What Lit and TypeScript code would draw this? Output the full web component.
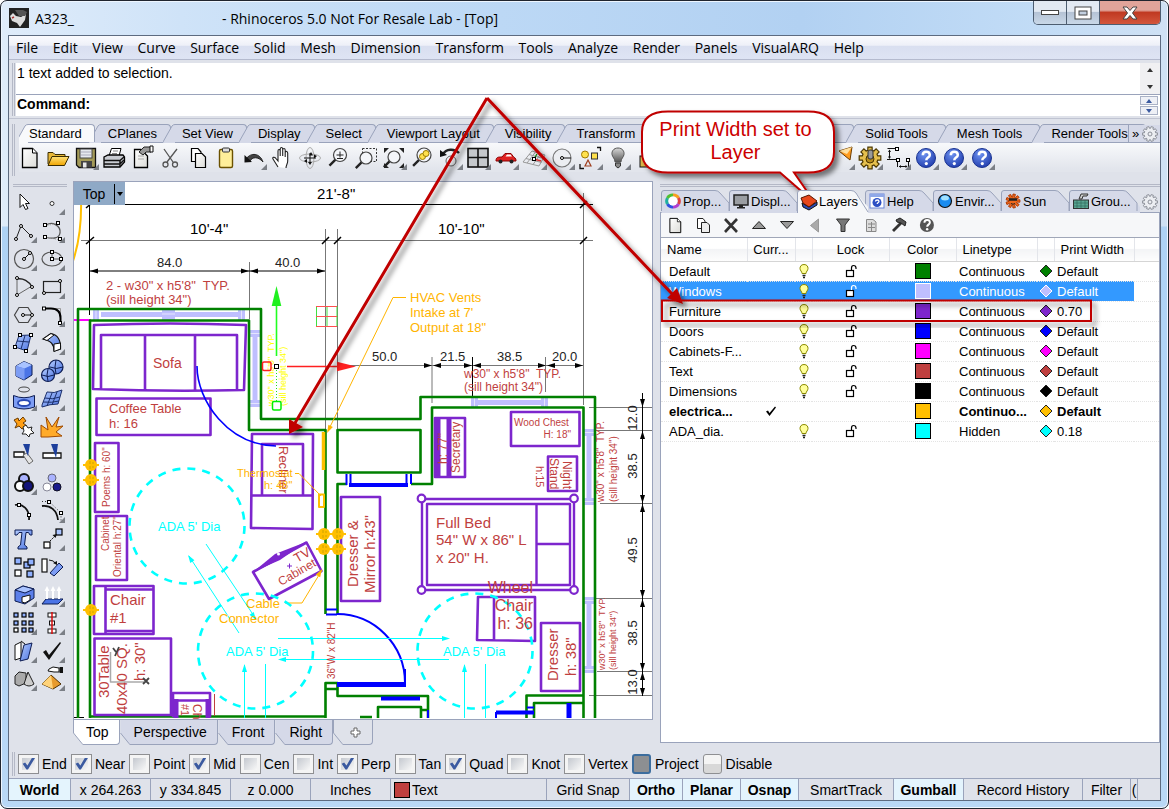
import { LitElement, html, svg, css } from "lit";
import { customElement } from "lit/decorators.js";
import { classMap } from "lit/directives/class-map.js";

/* ---------- icons, drawn on a 28 x 28 grid ---------- */
const page = svg`<path d="M6.500 4.500H16.500L21 9V23.500H6.500Z" fill="url(#pg)" stroke="#000" stroke-width="1.300"/><path d="M16.500 4.500V9H21" fill="#fff" stroke="#000"/>`;
const defs = svg`<defs>
  <linearGradient id="pg" x1="0" y1="0" x2="1" y2="1"><stop offset="0" stop-color="#fff"/><stop offset="1" stop-color="#dcdcd8"/></linearGradient>
  <linearGradient id="fo" x1="0" y1="0" x2="0" y2="1"><stop offset="0" stop-color="#ffe27a"/><stop offset="1" stop-color="#f0a400"/></linearGradient>
  <linearGradient id="bl" x1="0" y1="0" x2="1" y2="1"><stop offset="0" stop-color="#b4ccff"/><stop offset="1" stop-color="#4a72e0"/></linearGradient>
  <radialGradient id="hp" cx=".4" cy=".3" r=".8"><stop offset="0" stop-color="#6d92f0"/><stop offset="1" stop-color="#1b36a8"/></radialGradient>
  <linearGradient id="gr" x1="0" y1="0" x2="0" y2="1"><stop offset="0" stop-color="#d8d8d8"/><stop offset="1" stop-color="#555"/></linearGradient>
</defs>`;
const gearPath = (r: number, n: number, cx = 14, cy = 14, d = 3) => {
  let p = "";
  for (let i = 0; i < n; i++) {
    const a = (i * 2 * Math.PI) / n, s = Math.PI / n;
    const pt = (rr: number, aa: number) => `${(cx + rr * Math.cos(aa)).toFixed(1)} ${(cy + rr * Math.sin(aa)).toFixed(1)}`;
    p += `${i ? "L" : "M"}${pt(r, a - s * 0.5)}L${pt(r, a + s * 0.5)}L${pt(r - d, a + s * 0.7)}L${pt(r - d, a + s * 1.3)}`;
  }
  return p + "Z";
};
const help = svg`<circle cx="14" cy="14" r="9.500" fill="url(#hp)" stroke="#1a3390"/><path d="M10.800 11.200C10.800 8.800 12.200 7.800 14.200 7.800C16.400 7.800 17.800 9 17.800 10.900C17.800 13.600 14.300 13.600 14.300 16.200" fill="none" stroke="#fff" stroke-width="2.500"/><circle cx="14.300" cy="19.600" r="1.600" fill="#fff"/>`;
const dot = (x: number, y: number) => svg`<rect x=${x - 1.5} y=${y - 1.5} width="3" height="3" fill="#fff" stroke="#000"/>`;
const rnd = (x: number, y: number) => svg`<circle cx=${x} cy=${y} r="1.500" fill="#fff" stroke="#000"/>`;
const bx = (x: number, y: number, f: string, w = 5) => svg`<rect x=${x} y=${y} width=${w} height=${w} fill=${f} stroke="#000" stroke-width="1.200"/>`;
const lens = (x: number, y: number, r: number) => svg`<path d="M${x - r * 0.7} ${y + r * 0.7}L${x - r * 0.7 - 6} ${y + r * 0.7 + 6}" stroke="#222" stroke-width="2.400"/><circle cx=${x} cy=${y} r=${r} fill="#f4f6fa" stroke="#444" stroke-width="1.200"/>`;

const icons: Record<string, unknown> = {
  new: page,
  open: svg`<path d="M4 20V8.500H9L11 10.500H21V13" fill="#e8b838" stroke="#3a2c00"/><path d="M4 21.500L8 12.500H25L20.500 21.500Z" fill="url(#fo)" stroke="#3a2c00"/>`,
  save: svg`<path d="M4.500 4.500H23.500V23.500H7L4.500 21Z" fill="#a39a58" stroke="#111" stroke-width="1.300"/><rect x="8" y="5" width="12" height="9" fill="#e6e9ee" stroke="#444"/><path d="M9 8H19M9 11H19" stroke="#aab"/><rect x="9" y="17" width="11" height="6.500" fill="#444"/><rect x="11" y="18.500" width="3.500" height="5" fill="#e8e8e8"/>`,
  print: svg`<path d="M9 12L11.500 4.500H21L19 12" fill="#fff" stroke="#000"/><path d="M13 7H18M12 9.500H17" stroke="#888"/><path d="M4 13L8 11H23L24.500 13V18L20 23H4Z" fill="#c9ccd2" stroke="#000" stroke-width="1.300"/><path d="M4 16.500H20L24 13M4 20H20L24 16M20 23V16" fill="none" stroke="#111" stroke-width="1.500"/>`,
  props: svg`<path d="M6.500 5.500H13L19.500 12V23.500H6.500Z" fill="url(#pg)" stroke="#000" stroke-width="1.300"/><path d="M11 8L16 3H23V8H18L15 11Z" fill="#999" stroke="#222"/><path d="M22 2H25V8H22Z" fill="#fff" stroke="#111"/><path d="M10 12H16M10 15H16" stroke="#aaa"/>`,
  cut: svg`<path d="M8 5L17 18M21 5L11 18" stroke="#555" stroke-width="1.300"/><circle cx="9.500" cy="20.500" r="2.500" fill="none" stroke="#555" stroke-width="1.300"/><circle cx="19" cy="20.500" r="2.500" fill="none" stroke="#555" stroke-width="1.300"/>`,
  copy: svg`<path d="M7.500 4.500H14L17 8V17.500H7.500Z" fill="#fff" stroke="#000" stroke-width="1.200"/><path d="M11.500 9.500H18L21.500 13V23.500H11.500Z" fill="url(#pg)" stroke="#000" stroke-width="1.200"/>`,
  paste: svg`<rect x="7.500" y="5.500" width="13" height="18" rx="1.500" fill="#ffef9a" stroke="#6b5200" stroke-width="1.400"/><rect x="10.500" y="4" width="7" height="4" rx="1" fill="#ddd" stroke="#333"/>`,
  undo: svg`<path d="M6 15C11 8 20 9 23 18C18 12 12 13 10 17" fill="#444" stroke="#222"/><path d="M4.500 11L4.500 18.500L12 18Z" fill="#111"/>`,
  hand: svg`<path d="M10 23L5 15C4 13.500 6 12.500 7.500 14L10 17V7C10 5 12 5 12.200 7V12V5C12.500 3 14.500 3 14.700 5V12V6C15 4 17 4.200 17.200 6V13V8.500C17.500 7 19.500 7 19.700 9V17C19.700 20 18 21 18 24" fill="#fff" stroke="#222" stroke-width="1.100"/>`,
  rotate: svg`<ellipse cx="14" cy="14" rx="10.500" ry="4" fill="none" stroke="#aaa"/><ellipse cx="14" cy="14" rx="4" ry="10.500" fill="none" stroke="#aaa"/><path d="M8 14H20M14 9V19" stroke="#111"/><path d="M15 8L13 11.500H17ZM21 12L18 10.500V14.500ZM8 17L11 15V19ZM14 21L12 18H16Z" fill="#111"/>`,
  zoom: svg`${lens(16, 11, 6.5)}<path d="M12.500 11H19.500M16 7.500V13.500M13 14.500H19" stroke="#222"/>`,
  zoomwin: svg`<rect x="10.500" y="4.500" width="14" height="13" fill="none" stroke="#333" stroke-dasharray="2 1.500"/>${lens(14, 14, 6)}`,
  zoomext: svg`${lens(14, 13, 6)}<path d="M4 4H9L4 9ZM24 4V9L19 4ZM24 24H19L24 19ZM4 24V19L9 24Z" fill="#222"/>`,
  zoomsel: svg`${lens(16, 11, 7)}<circle cx="14.500" cy="12.500" r="3" fill="#ffe14d" stroke="#9a7a00"/><circle cx="18" cy="9.500" r="3" fill="#ffe14d" stroke="#9a7a00"/>`,
  undoview: svg`<circle cx="15" cy="17" r="5" fill="#f0f1f5" stroke="#666"/><path d="M7 10C10 5 18 4 23 9" fill="none" stroke="#222" stroke-width="2.400"/><path d="M4 6V13L11 11Z" fill="#111"/>`,
  four: svg`<rect x="4" y="4.500" width="20" height="18.500" fill="#c5c8cc" stroke="#111" stroke-width="1.600"/><path d="M14 4.500V23M4 13.500H24" stroke="#111" stroke-width="1.600"/>`,
  car: svg`<path d="M4 17C4 13 6 13 10 13L13 9.500H19L22 13.500C24 14 24 16 24 17Z" fill="#e02222" stroke="#8a0000"/><path d="M13.500 12.500L15 10.500H18.500L20 12.500Z" fill="#fff"/><circle cx="8.500" cy="17.500" r="2" fill="#222"/><circle cx="19.500" cy="17.500" r="2" fill="#222"/>`,
  grid: svg`<path d="M3 18L12 7L25 11L19 22ZM6 14.500L21.500 18.500M9 10.500L23.500 14.500M7 19L15.500 8M13 20.500L21 9.500" fill="none" stroke="#999"/><path d="M14 15L21 17" stroke="#d33" stroke-width="1.500"/><path d="M14 15L17 10" stroke="#080" stroke-width="1.200"/>${dot(14, 15)}`,
  circ: svg`<circle cx="14" cy="14" r="9" fill="#eceef2" stroke="#777" stroke-width="1.200"/><path d="M14 14H23" stroke="#111"/>${rnd(14, 14)}`,
  shapes: svg`<circle cx="9" cy="10.500" r="3.500" fill="#ffe14d" stroke="#a07800"/><rect x="15.500" y="9" width="6" height="6" fill="#ffe14d" stroke="#333"/><path d="M12 16L15 22H9Z" fill="none" stroke="#a04020" stroke-width="1.200"/><path d="M21 3.500H24.500V7M4 20V24.500H8" fill="none" stroke="#111" stroke-width="1.300"/>`,
  bulb: svg`<path d="M14 4C9.500 4 7.500 7.500 8 10.500C8.500 13.500 11 14.500 11 18H17C17 14.500 19.500 13.500 20 10.500C20.500 7.500 18.500 4 14 4Z" fill="url(#gr)" stroke="#555"/><path d="M11.500 19H16.500V22L14 24L11.500 22Z" fill="#888" stroke="#333"/>`,
  padlock: svg`<rect x="8" y="12" width="14" height="11" fill="#ddb848" stroke="#111"/><path d="M11 12V7C11 3 19 3 19 7V12" fill="none" stroke="#111" stroke-width="2"/>`,
  cone: svg`<path d="M11 7L24 3L22 16Z" fill="#ff9b1e" stroke="#6b3b00"/><path d="M11 7L24 3L19 10Z" fill="#ffe0a0"/>`,
  gold: svg`<path d=${gearPath(11, 8)} fill="#e6c04e" stroke="#4a3600" stroke-width="1.200"/><circle cx="14" cy="15" r="4" fill="#b98d1c" stroke="#4a3600"/><rect x="12" y="6" width="5" height="9" rx="2" fill="#999" stroke="#333"/>`,
  dims: svg`<path d="M3.500 4.500H12M3 15.500H13.500V23M24.500 17V24M5.500 6V14M15 22.500H23" fill="none" stroke="#111"/><path d="M4 8L5.500 5.500L7 8ZM4 12.500L5.500 15L7 12.500ZM17 21L15 22.500L17 24ZM21.500 21L23.500 22.500L21.500 24Z" fill="#111"/>${dot(13, 5)}${dot(14, 16)}${dot(24, 16)}`,
  help,
  /* sidebar */
  cursor: svg`<path d="M10 5L10 18.500L13 15.500L15.500 20.500L18 19.500L15.500 14.500H19.500Z" fill="#fff" stroke="#111"/>`,
  point: svg`<circle cx="14" cy="14.500" r="2" fill="#fff" stroke="#333"/>`,
  poly: svg`<path d="M6 22L11 9L21 19" fill="none" stroke="#222"/>${rnd(6, 22)}${rnd(11, 9)}${rnd(21, 19)}`,
  curve: svg`<path d="M7 9C14 3 23 9 22 16C21 22 14 22 7 20" fill="none" stroke="#555" stroke-width="1.300"/><path d="M7 9L20 6M7 20L22 23" stroke="#999" stroke-dasharray="1 1.500"/>${dot(7, 8)}${dot(20, 6)}${dot(7, 20)}${dot(22, 22)}`,
  circle: svg`<circle cx="14" cy="14" r="9.500" fill="none" stroke="#555" stroke-width="1.200"/><path d="M14 14L20 8" stroke="#111"/>${rnd(14, 14)}${rnd(20, 8)}`,
  ellipse: svg`<ellipse cx="14" cy="14" rx="10" ry="7" fill="none" stroke="#555" stroke-width="1.200"/><path d="M14 14H23M14 14V7" stroke="#555"/>${dot(14, 14)}${dot(14, 7)}${dot(23, 14)}`,
  arc: svg`<path d="M7 5V22L22 13" fill="none" stroke="#666"/><path d="M7 6C13 5 19 8 22 14" fill="none" stroke="#222" stroke-width="1.400"/>${rnd(7, 5)}${rnd(7, 22)}${rnd(22, 14)}`,
  rect: svg`<rect x="5.500" y="8.500" width="17" height="11" fill="none" stroke="#222" stroke-width="1.200"/>${rnd(22, 8)}${rnd(6, 20)}`,
  hex: svg`<path d="M4.500 14L9 6.500H18L22.500 14L18 21.500H9Z" fill="none" stroke="#444" stroke-width="1.200"/><path d="M14 14H22" stroke="#111"/>${rnd(13, 14)}${rnd(22, 14)}`,
  fillet: svg`<path d="M6 7.500H22.500V22" fill="none" stroke="#999"/><path d="M6 7.500H13C19 7.500 22.500 11 22.500 17V22" fill="none" stroke="#000" stroke-width="2"/>${dot(6, 7.5)}${dot(22, 22)}`,
  srf: svg`<path d="M9 6.500L21 6L17 22L5 18Z" fill="url(#bl)" stroke="#1b2f6b"/><path d="M7 12L19 13M15 6.500L11 20" stroke="#1b2f6b"/>${dot(10, 6)}${dot(21, 6)}${dot(5, 18)}${dot(16, 22)}`,
  sweep: svg`<path d="M5 10L13 4.500C20 6 23 11 22.500 20L16 22C16 15 13 12 5 10Z" fill="url(#bl)" stroke="#111" stroke-width="1.200"/><path d="M5 10L13 4.500L16 6L9 11.500ZM16 15L22.500 14V20L16 22.500Z" fill="#fff" stroke="#111"/>`,
  box: svg`<path d="M6 9L14 4.500L22 8V18L14 23L6 19Z" fill="#4b74e6" stroke="#0d1c52"/><path d="M6 9L14 4.500L22 8L14.500 11.500Z" fill="#a9c3ff"/><path d="M6 9L14.500 11.500V23L6 19Z" fill="#7d9df4"/>`,
  spheres: svg`<circle cx="18" cy="10" r="7" fill="url(#bl)" stroke="#0d1c52" stroke-width="1.200"/><circle cx="10" cy="18" r="6.500" fill="url(#bl)" stroke="#0d1c52" stroke-width="1.200"/><path d="M4 18Q10 21 16 18M10 12Q8 18 10 24M12 10Q18 13 25 10M18 3Q16 10 18 17" fill="none" stroke="#0d1c52"/>`,
  project: svg`<ellipse cx="14" cy="4.500" rx="5.500" ry="2.500" fill="none" stroke="#444"/><path d="M3.500 10.500Q14 15 24.500 10.500V22Q14 26 3.500 22Z" fill="#7d9df4" stroke="#0d1c52"/><ellipse cx="14" cy="18" rx="6" ry="3" fill="#fff" stroke="#2b4bb5" stroke-width="2"/>`,
  mesh: svg`<path d="M4 20L9 7Q16 9 24 5L20 19Q12 19 4 22Z" fill="url(#bl)" stroke="#1b2f6b"/><path d="M7 13Q14 15 22 12M14 8L9 21M19 7L14 20M5 17Q14 18 21 16" fill="none" stroke="#1b2f6b"/>`,
  puzzle: svg`<path d="M4 7L8 5L9 8L13 4L16 8L13 10L17 13L12 16L9 13L5 15L7 11Z" fill="#ff9e14" stroke="#6b3b00"/><path d="M13 14L16 12L18 15L22 14L21 17L24 20L20 21L19 24L16 21L12 21L14 18Z" fill="#fff" stroke="#222"/>`,
  burst: svg`<path d="M3 24V12L10 17L8 4L14 14L21 4L18 14L25 13L18 19L24 23L10 24Z" fill="#ffab2a" stroke="#a04a00"/>`,
  trim: svg`<path d="M4 11H14V16H4Z" fill="#fff" stroke="#111" stroke-width="1.300"/><path d="M13 14L17 12L23 20L19 23Z" fill="#e5e5e5" stroke="#666"/><path d="M13 3L20 3L18 15Z" fill="#1d3f9c"/>`,
  split: svg`<path d="M5 12H23V17H5Z" fill="#fff" stroke="#111" stroke-width="1.300"/><path d="M13 3H20L18 17Z" fill="#1d3f9c"/>`,
  bool: svg`<circle cx="14" cy="10" r="5" fill="#a9b2ff" stroke="#111" stroke-width="2"/><circle cx="10" cy="17" r="5" fill="#fff" stroke="#111" stroke-width="2"/><circle cx="18" cy="17" r="5" fill="#14147a" stroke="#111" stroke-width="2"/>`,
  three: svg`<circle cx="14" cy="9" r="4" fill="#a9b2ff" stroke="#667"/><circle cx="9" cy="18" r="4" fill="#fff" stroke="#889"/><circle cx="19" cy="18" r="4" fill="#1a1a8c" stroke="#112"/>`,
  cpts: svg`<path d="M5 8C12 6 20 12 19 23" fill="none" stroke="#111" stroke-width="1.800"/>${dot(9, 8)}${dot(19, 18)}`,
  cedit: svg`<path d="M4 9C12 8 19 13 20 23" fill="none" stroke="#111" stroke-width="1.800"/><path d="M4 4.500H11L23 16V24" fill="none" stroke="#333" stroke-dasharray="1 2"/>${dot(11, 5)}${dot(23, 16)}`,
  text: svg`<path d="M5 5H22V10H20L18.500 7.500H16L14.500 20L17 22V24H8V22L10.500 20L12 7.500H9L7 10H5Z" fill="url(#bl)" stroke="#0d1c52"/>`,
  move: svg`${bx(6, 17, "#fff", 6)}${bx(18, 4, "#a9c3ff", 6)}<path d="M12 16L17 11" stroke="#111" stroke-dasharray="2 1"/><path d="M19 9L14.500 10L17.500 13Z" fill="#111"/>`,
  copies: svg`${bx(5, 5, "#8fb0ff", 6)}${bx(5, 17, "#fff", 6)}${bx(14, 9, "#8fb0ff", 6)}${bx(18, 6, "#8fb0ff", 6)}${bx(17, 18, "#8fb0ff", 6)}`,
  rot: svg`<rect x="4" y="6" width="5" height="13" fill="#fff" stroke="#111" stroke-width="1.200"/><path d="M21 10L25 14L16 23L12 20Z" fill="#7d9df4" stroke="#0d1c52"/><path d="M11 7Q16 7 18 11" fill="none" stroke="#111"/><path d="M19 12L15 10L19 8Z" fill="#111"/>`,
  solidedit: svg`<path d="M5 9L13 5L24 8V17L15 23L5 20Z" fill="#5c80ea" stroke="#0d1c52"/><path d="M5 9L13 5L24 8L15 12Z" fill="#a9c3ff" stroke="#0d1c52"/><path d="M12 16L20 14V19L15 22L12 21Z" fill="#fff" stroke="#111"/>`,
  extr: svg`<path d="M4 23L8 18H25L20 23Z" fill="#4b74e6" stroke="#0d1c52"/><path d="M9 18V8M15 18V8M21 18V8" stroke="#fff" stroke-width="2"/><path d="M6.500 10L9 5L11.500 10ZM12.500 10L15 5L17.500 10ZM18.500 10L21 5L23.500 10Z" fill="#fff"/>`,
  array: svg`${[4, 12, 19].map((y) => [4, 12, 19].map((x) => bx(x, y, x === 4 && y === 19 ? "#fff" : "#8fb0ff", 4)))}`,
  align: svg`<rect x="10" y="4" width="8" height="4" fill="#fff" stroke="#111"/><rect x="11.500" y="12" width="5" height="4" fill="#fff" stroke="#111"/><rect x="10" y="20" width="8" height="4" fill="#fff" stroke="#111"/><path d="M14 3V25" stroke="#d00" stroke-width="1.400"/>`,
  check2: svg`<path d="M5 8L11 5V21L5 23Z" fill="#fff" stroke="#111"/><path d="M14 8L22 6L18 22L10 24Z" fill="url(#bl)" stroke="#0d1c52"/><path d="M11 4L15 7" stroke="#111"/>`,
  tick: svg`<path d="M5 15L8 13L11 18L22 5L23 6L11 23Z" fill="#111"/>`,
  solids: svg`<path d="M5 11L9 7L16 8V18L9 21L5 19Z" fill="#aaa" stroke="#222"/><path d="M18 7L24 19Q19 23 14 19Z" fill="#ccc" stroke="#222"/>`,
  pyramid: svg`<path d="M13 10L23 19L15 24L4 19Z" fill="#e79a2c" stroke="#4d2f00"/><path d="M13 10L15 24L4 19Z" fill="#ffd37a"/><path d="M11 4L15 2L21 3V7H16L10 6Z" fill="#fff" stroke="#111"/><rect x="21.500" y="2" width="3.500" height="6" fill="#111"/>`,
  /* layer panel strip */
  pnew: svg`<g transform="translate(4 4) scale(.75)">${page}</g>`,
  pcopy: svg`<path d="M8.500 7.500H14L16 10V17.500H8.500Z" fill="#fff" stroke="#222"/><path d="M12.500 11.500H18L20.500 14V21.500H12.500Z" fill="#eee" stroke="#222"/>`,
  pdel: svg`<path d="M8 8L20 21M20 8L8 21" stroke="#333" stroke-width="2.600"/>`,
  pup: svg`<path d="M7.500 17.500L14 10.500L20.500 17.500Z" fill="#999" stroke="#222"/>`,
  pdown: svg`<path d="M7.500 10.500L14 17.500L20.500 10.500Z" fill="#999" stroke="#222"/>`,
  pleft: svg`<path d="M17.500 8V21L9.500 14.500Z" fill="#aaa" stroke="#999"/>`,
  pfilter: svg`<path d="M7.500 8H20.500L16 14V20.500H12V14Z" fill="#777" stroke="#333"/>`,
  pgrid: svg`<path d="M9.500 8.500H16L19 11V20.500H9.500Z" fill="#ddd" stroke="#888"/><path d="M11 13H18M11 16.500H18M14.500 11V20" stroke="#888"/>`,
  phammer: svg`<path d="M8 20L16 12" stroke="#333" stroke-width="2.800"/><path d="M11 9L15 7L21 11L20 15L16 12L12 11Z" fill="#555" stroke="#222"/>`,
  phelp: svg`<g transform="translate(3 3) scale(.78)"><circle cx="14" cy="14" r="9" fill="#555"/><path d="M10.800 11.200C10.800 8.800 12.200 7.800 14.200 7.800C16.400 7.800 17.800 9 17.800 10.900C17.800 13.600 14.300 13.600 14.300 16.200" fill="none" stroke="#fff" stroke-width="2.500"/><circle cx="14.300" cy="19.600" r="1.600" fill="#fff"/></g>`,
  gear: svg`<path d=${gearPath(7.5, 10, 14, 14, 1.8)} fill="#eceef2" stroke="#8b8f98"/><circle cx="14" cy="14" r="2" fill="none" stroke="#8b8f98"/>`,
  /* panel tab icons */
  wheel: svg`<path d="M14 8A6 6 0 0 1 19.500 11" stroke="#f8a020" fill="none" stroke-width="3"/><path d="M19.500 11A6 6 0 0 1 19.500 17" stroke="#e04040" fill="none" stroke-width="3"/><path d="M19.500 17A6 6 0 0 1 14 20" stroke="#b040d0" fill="none" stroke-width="3"/><path d="M14 20A6 6 0 0 1 8.500 17" stroke="#3050e0" fill="none" stroke-width="3"/><path d="M8.500 17A6 6 0 0 1 8.500 11" stroke="#20b0a0" fill="none" stroke-width="3"/><path d="M8.500 11A6 6 0 0 1 14 8" stroke="#50c030" fill="none" stroke-width="3"/><circle cx="14" cy="14" r="4.500" fill="#fff"/>`,
  monitor: svg`<rect x="7" y="8" width="14" height="10" fill="#9a9da2" stroke="#222" stroke-width="1.500"/><path d="M12 18H16V20H18V21.500H10V20H12Z" fill="#222"/>`,
  layers: svg`<path d="M7 15L8 19L14 22L22 17V14L14 19Z" fill="#2b4bb5" stroke="#111"/><path d="M6 10L14 7L22 13L14 19L8 15Z" fill="#e8481c" stroke="#5a1500"/>`,
  phlp: svg`<rect x="7" y="7" width="14" height="14" fill="#fff" stroke="#6a86d8"/><rect x="7" y="7" width="14" height="3" fill="#8fa8e8"/><circle cx="14" cy="15.500" r="4.500" fill="#2c4fc4"/><path d="M12.500 14.500C12.500 12.500 16 12.500 16 14.500C16 15.500 14.200 15.500 14.200 17" fill="none" stroke="#fff" stroke-width="1.300"/>`,
  globe: svg`<circle cx="14" cy="14" r="6.500" fill="#1b8cf0" stroke="#111" stroke-width="1.200"/><ellipse cx="14" cy="11" rx="4" ry="2.500" fill="#9fe0ff"/>`,
  sun: svg`<path d=${gearPath(7, 9, 14, 14, 3)} fill="#f0681c" stroke="#b23a00"/><path d="M10 12.500H18" stroke="#222" stroke-width="2.500"/><path d="M12 16.500Q14 18 16 16.500" fill="none" stroke="#222"/>`,
  ground: svg`<rect x="6.500" y="13" width="15" height="8.500" fill="#59a592" stroke="#333"/><path d="M6.500 16H21.500M6.500 19H21.500M10 13V21M14 13V21M18 13V21" stroke="#2f6b5c" stroke-width=".7"/><path d="M12 12L14 7H21L20 9H16L15 12Z" fill="#ccc" stroke="#333"/>`,
};

const icon = (n: string, tri = false) =>
  html`<svg width="28" height="28" viewBox="0 0 28 28" aria-hidden="true">${defs}${icons[n]}${tri ? svg`<path d="M27 20V26H21Z" fill="#7b7f86"/>` : ""}</svg>`;
const smallIcon = (n: string) => html`<svg width="20" height="20" viewBox="4 4 20 20" aria-hidden="true">${defs}${icons[n]}</svg>`;

/* ---------- data ---------- */
const menus = ["File", "Edit", "View", "Curve", "Surface", "Solid", "Mesh", "Dimension", "Transform", "Tools", "Analyze", "Render", "Panels", "VisualARQ", "Help"];
const toolTabs = ["Standard", "CPlanes", "Set View", "Display", "Select", "Viewport Layout", "Visibility", "Transform", "", "Solid Tools", "Mesh Tools", "Render Tools"];
const mainTools = "new open save* print props cut copy paste undo* hand rotate zoom zoomwin zoomext* zoomsel undoview* four* car* grid* circ* shapes* bulb* padlock* srf box spheres bool circle rect cone* gold* dims* help* help* help*".split(" ");
const sideTools = "cursor point* poly* curve* circle* ellipse* arc* rect* hex* fillet* srf* sweep* box* spheres* project* mesh* puzzle burst trim split bool* three cpts cedit* text move* copies rot solidedit* extr* array* align* check2* tick* solids* pyramid*".split(" ");
const panelTabs = [["wheel", "Prop..."], ["monitor", "Displ..."], ["layers", "Layers"], ["phlp", "Help"], ["globe", "Envir..."], ["sun", "Sun"], ["ground", "Grou..."]];
const panelTools = "pnew pcopy pdel pup pdown pleft pfilter pgrid phammer phelp".split(" ");
const layers = [
  { name: "Default", color: "#008000", lt: "Continuous", pw: "Default" },
  { name: "Windows", color: "#bfbfff", lt: "Continuous", pw: "Default", sel: true },
  { name: "Furniture", color: "#7d26cd", lt: "Continuous", pw: "0.70" },
  { name: "Doors", color: "#0000ff", lt: "Continuous", pw: "Default" },
  { name: "Cabinets-F...", color: "#ff00ff", lt: "Continuous", pw: "Default" },
  { name: "Text", color: "#bf3f3f", lt: "Continuous", pw: "Default" },
  { name: "Dimensions", color: "#000000", lt: "Continuous", pw: "Default" },
  { name: "electrica...", color: "#ffbf00", lt: "Continuo...", pw: "Default", cur: true },
  { name: "ADA_dia.", color: "#00ffff", lt: "Hidden", pw: "0.18" },
];
const snaps: [string, boolean][] = [["End", true], ["Near", true], ["Point", false], ["Mid", true], ["Cen", false], ["Int", false], ["Perp", true], ["Tan", false], ["Quad", true], ["Knot", false], ["Vertex", false]];

/* ---------- floor plan ---------- */
const V = "#7d26cd", G = "#008000", B = "#0000ff", W = "#bfbfff", T = "#bf3f3f", O = "#ffb400", C = "#00ffff";
const tx = (x: number, y: number, s: number, t: string, f = T, r = 0, a = "start") =>
  svg`<text x=${x} y=${y} font-size=${s} fill=${f} text-anchor=${a} transform=${`rotate(${r} ${x} ${y})`} xml:space="preserve">${t}</text>`;
const ah = (x: number, y: number, r: number, f = "#000", l = 8, w = 2.5) =>
  svg`<path d="M0 0L${-l} ${-w}V${w}Z" fill=${f} transform=${`translate(${x} ${y}) rotate(${r})`}/>`;
const ln = (d: string, c: string, w: number, dash = "") => svg`<path d=${d} fill="none" stroke=${c} stroke-width=${w} stroke-dasharray=${dash || "none"} stroke-linejoin="round"/>`;
const winBlock = (x: number, y: number, w: number, h: number) => svg`<rect x=${x} y=${y} width=${w} height=${h} fill=${W} /><path d=${w > h ? `M${x} ${y + h / 2}H${x + w}` : `M${x + w / 2} ${y}V${y + h}`} stroke="#e4e4ff"/>`;
const outlet = (x: number, y: number, bar = true) => svg`<circle cx=${x} cy=${y} r="6" fill="#ffbf00"/><path d="M${x - 1} ${y - 4}V${y + 4}M${x + 2} ${y - 3}V${y + 3}" stroke="#c0a000" stroke-width=".8"/>${bar ? ln(`M${x - 8} ${y}H${x + 8}`, "#ffbf00", 2) : ""}`;

const plan = svg`
  ${ln("M81 200Q82 235 73 262", "#ffbf00", 2)}
  ${ln("M73 321H91", "#ff00ff", 2)}
  ${ln("M249.500 263V320M325.500 230V432M337.500 230V432M583.500 194V406M432 358V404M545.500 358V393M81 241.500H593M349 366.500H583M589 408.500H653M594 431.500H653M600 504.500H653M594 599.500H653M597 672.500H653M589 696.500H653", "#777", 1)}
  ${ln("M120 205.500H593M89.500 206V316M90 272H325M472.500 358V397M642.500 394V697M72 718.500H84", "#000", 1)}
  ${ln("M86 209L94 202M86 245L94 238M322 245L329 238M334 245L341 238M580 245L587 238M580 209L587 202", "#000", 1.5)}
  ${ah(90, 272, 180)}${ah(249, 272, 0)}${ah(250, 272, 180)}${ah(325, 272, 0)}
  ${[432, 472, 546].map((x) => svg`${ah(x, 366.5, 0)}${ah(x + 1, 366.5, 180)}`)}${ah(583, 366.5, 0)}
  ${ah(642.5, 408, 90)}${[432, 505, 600, 673].map((y) => svg`${ah(642.5, y, 270)}`)}${[504, 599, 672, 697].map((y) => svg`${ah(642.5, y, 90)}`)}
  ${tx(317, 200, 15, "21'-8\"", "#000")}${tx(190, 235, 15, "10'-4\"", "#000")}${tx(438, 235, 15, "10'-10\"", "#000")}
  ${tx(157, 268, 13, "84.0", "#222")}${tx(275, 268, 13, "40.0", "#222")}
  ${tx(372, 362, 13, "50.0", "#222")}${tx(440, 362, 13, "21.5", "#222")}${tx(497, 362, 13, "38.5", "#222")}${tx(552, 362, 13, "20.0", "#222")}
  ${([[419, "12.0"], [467, "38.5"], [551, "49.5"], [634, "38.5"], [683, "13.0"]] as [number, string][]).map(([y, t]) => tx(637, y, 13, t, "#222", -90, "middle"))}

  ${ln("M101 315.500H241M255 335V404M475 403.500H543M589 435V502M589 602V670", W, 5)}
  ${winBlock(93, 309, 6, 12)}${winBlock(162, 309, 13, 12)}${winBlock(238, 309, 7, 12)}
  ${winBlock(249, 331, 12, 7)}${winBlock(249, 401, 12, 7)}${winBlock(471, 399, 7, 10)}${winBlock(541, 399, 7, 10)}
  ${winBlock(583, 430, 12, 7)}${winBlock(583, 499, 12, 7)}${winBlock(583, 598, 12, 7)}${winBlock(583, 667, 12, 7)}
  ${ln("M78 719V310H261V420H420.500V398H595V719M90 719V321.500H249V431H325.500V615M337.500 615V485H347M337.500 431H420.500V473.500H337.500ZM411 485H432V408.500H583.500V719M90 717.500H325.500M325.500 719V684H337.500V690M325.500 690H337.500V697H428V719M378 719V708H421V719M421 711H428M360 718H372M583.500 696.500H526.500V719M534 719V704H583", G, 2.6)}

  ${ln("M94 326Q170 323 246 326L244 391Q170 393 93 390ZM101 390V336H237V390M145 336V391M195 336V391M96.500 399.500H210.500V436H96.500ZM95 444H118.500V513H95ZM96 517H127V581H96ZM94 587H153.500V635H94ZM105.500 587V635M105.500 590.500H153M105.500 632H153M94.500 639.500H171V716H94.500ZM252 435H313L312.500 530L251 529ZM262 496V445H303V496M251 496.500H313M341 498H380V602H341ZM541 624H580V692H541ZM478 598H535V642L477 641ZM494 598V641M548 457.500H577V492H548ZM511 413H579.500V447H511ZM435 419H465V478H435ZM173 718V694H210V718M176 701.500H207", V, 2.6)}
  ${ln("M422 500H574V591H422ZM427 505H570V586H427ZM536.500 505V586M537 545H570", V, 2.4)}
  ${ln("M438 420V478M449 420V478M176 700V719M208 700V719", V, 5)}
  ${[[421.5, 499.5], [574, 499.5], [421.5, 591], [574, 591]].map(([x, y]) => svg`<circle cx=${x} cy=${y} r="3.800" fill="#fff" stroke=${V} stroke-width="2.200"/>`)}
  ${ln("M253 573L306.500 543.500L321.500 572L269 600Z", V, 2.6)}<path d="M253 573L275 555L306 543L280 561Z" fill=${V}/><circle cx="278.500" cy="555" r="1.500" fill="#fff"/>${ln("M287 567H292M289.500 564.500V569.500", V, 1)}

  ${ln("M197 367C197 402 228 446 276 447", B, 1.6)}
  ${ln("M337 615A68 69 0 0 1 405 684V670", B, 2)}
  ${ln("M326 610.500H337M326 615.500H337M346.500 475V486M350.500 475V486M406.500 475V486M411 475V485M496 719V713M527 708.500H534M428 711V719", B, 2)}
  ${ln("M349 486H408M381 699.500H420M496 713.500H534", B, 4)}${ln("M337 685.500H406M569 704V719", B, 5)}

  ${ln("M406 298.500H393L328 432M285 604H302L322 571M295 474.500H299L321 497", O, 1)}${ah(327, 434, 117, O)}${ah(322, 570, -60, O)}
  ${ln("M323.500 433V471", "#ffbf00", 3.5)}${ln("M319 495.500H324V508H319Z", "#ffbf00", 2)}
  ${outlet(91, 466)}${outlet(91, 481)}${outlet(91, 611)}${outlet(324, 535)}${outlet(338, 535)}${outlet(324, 550)}${outlet(338, 550)}

  ${[[187, 527], [255.5, 652], [475, 652]].map(([x, y]) => svg`<circle cx=${x} cy=${y} r="57.500" fill="none" stroke=${C} stroke-width="2.600" stroke-dasharray="8 7.050"/>`)}
  ${ln("M239 634L189 557M206 545L256 620M278 639.500H448M280 660.500H449M244.500 666V719M265.500 665V719M464.500 666V719M485.500 665V719", C, 1)}
  ${ah(188, 556, -123, C)}${ah(256, 621, 57, C)}${ah(450, 639.5, 0, C)}${ah(278, 660.5, 180, C)}${ah(244.5, 665, -90, C)}${ah(464.5, 665, -90, C)}
  ${tx(158, 532, 13, "ADA 5' Dia", C)}${tx(226, 657, 13, "ADA 5' Dia", C)}${tx(443, 657, 13, "ADA 5' Dia", C)}

  ${tx(106, 291, 13, "2 - w30\" x h5'8\"  TYP.")}${tx(106, 305, 13, "(sill height 34\")")}
  ${tx(464, 379, 12, "w30\" x h5'8\"  TYP.")}${tx(464, 392, 12, "(sill height 34\")")}
  ${tx(604, 503, 10, "w30\" x h5'8\"  TYP.", T, -90)}${tx(617, 503, 10, "(sill height 34\")", T, -90)}
  ${tx(605, 671, 9, "w30\" x h5'8\"  TYP.", T, -90)}${tx(616, 671, 9, "(sill height 34\")", T, -90)}
  ${tx(153, 369, 14, "Sofa")}${tx(109, 414, 13, "Coffee Table")}${tx(109, 429, 13, "h: 16")}
  ${tx(110, 508, 10, "Poems h: 60\"", T, -90)}${tx(109, 552, 10, "Cabinet", T, -90)}${tx(121, 578, 10, "Oriental h:27\"", T, -90)}
  ${tx(110, 606, 15, "Chair")}${tx(110, 624, 15, "#1")}
  ${tx(109, 699, 15, "30Table", T, -90)}${tx(127, 715, 15, "40x40 SQ.", T, -90)}${tx(145, 682, 15, "h: 30\"", T, -90)}
  ${tx(193, 705, 12, "Ch", T, 90)}${tx(181, 705, 11, "#1", T, 90)}${ln("M214.500 695V717", T, 1)}
  ${tx(279, 447, 13, "Recliner", T, 90)}${tx(297, 564, 13, "TV", T, -30)}${tx(281, 587, 12, "Cabinet", T, -30)}
  ${tx(335, 680, 10, "36\"W x 82\"H", T, -90)}
  ${tx(358, 588, 15, "Dresser &", T, -90)}${tx(375, 594, 15, "Mirror h:43\"", T, -90)}
  ${tx(436, 529, 15, "Full Bed")}${tx(436, 546, 15, "54\" W x 86\" L")}${tx(436, 564, 15, "x 20\" H.")}
  ${tx(533, 594, 16, "Wheel", T, 0, "end")}${tx(533, 612, 16, "Chair", T, 0, "end")}${tx(533, 630, 16, "h: 36", T, 0, "end")}
  ${tx(558, 682, 15, "Dresser", T, -90)}${tx(576, 677, 15, "h: 38\"", T, -90)}
  ${tx(514, 427, 10, "Wood Chest")}${tx(571, 439, 10, "H: 18\"", T, 0, "end")}
  ${tx(447, 465, 12, "h: 77\"", T, -90)}${tx(460, 474, 12, "Secretary", T, -90)}
  ${tx(563, 462, 12, "Night", T, 90)}${tx(550, 459, 12, "Stand", T, 90)}${tx(536, 467, 11, "h:15", T, 90)}
  ${tx(410, 303, 13, "HVAC Vents", O)}${tx(410, 318, 13, "Intake at 7'", O)}${tx(410, 333, 13, "Output at 18\"", O)}
  ${tx(237, 478, 11, "Thermostat", O)}${tx(264, 490, 11, "h: 48\"", O)}${tx(246, 609, 13, "Cable", O)}${tx(219, 624, 13, "Connector", O)}

  ${tx(274, 407, 9, "w30\" x h5'8\"  TYP.", "#ffff00", -90)}${tx(286, 407, 9, "(sill height 34\")", "#ffff00", -90)}
  ${ln("M316.500 307V327M327 307V327M337 307V327", "#40e040", 1)}${ln("M316 307.500H337M316 317.500H337M316 327.500H337", "#ff5050", 1)}
  ${ln("M276.500 357V306", "#20ff20", 1.6)}${ah(276.5, 287, -90, "#20f020", 20, 4.8)}${ln("M287 367.500H340", "#ff2020", 1.6)}${ah(356, 367.5, 0, "#ff2020", 19, 4.8)}
  ${ln("M276.500 371V402", "#20e020", 1, "1 2")}
  <rect x="262.500" y="363" width="8.500" height="8.500" rx="1.500" fill="none" stroke="#ff2020" stroke-width="1.500"/>
  <rect x="272.500" y="402.500" width="8.500" height="8.500" rx="1.500" fill="#fff" stroke="#00f000" stroke-width="1.500"/>
  <rect x="274.500" y="365.500" width="4" height="4" fill="#fff" stroke="#000"/>
  ${ln("M110.500 653V683H144", "#aaa", 1.5)}${ln("M143 679L149 685M149 679L143 685M113 649L116 653M119 648L115 657", "#444", 1.8)}`;

@customElement("rhino-plan")
class RhinoPlan extends LitElement {
  static styles = css`
    :host { display: block; overflow: hidden; background: #fff; }
    svg { display: block; width: 100%; height: 100%; overflow: visible; font-family: "Liberation Sans", Arial, sans-serif; }
  `;
  render() {
    return html`<svg viewBox="74 183 578 536" preserveAspectRatio="xMinYMin meet" role="img" aria-label="Floor plan">${plan}</svg>`;
  }
}

@customElement("layer-panel")
class LayerPanel extends LitElement {
  static styles = css`
    :host { display: flex; flex-direction: column; min-width: 0; font: 13px "Liberation Sans", Arial, sans-serif; color: #000; }
    button { font: inherit; color: inherit; background: none; border: 0; padding: 0; margin: 0; }
    svg { display: block; flex: none; }
    .grip { height: 3px; margin-top: 3px; border-top: 1px solid #b4b8c6; border-bottom: 1px solid #b4b8c6; box-sizing: border-box; }
    .tabs { display: flex; height: 22px; margin-top: 3px; align-items: flex-end; border-bottom: 1px solid #9aa3bb; padding-left: 1px; }
    .tab { position: relative; width: 68px; height: 22px; display: flex; align-items: center; padding-left: 2px; white-space: nowrap; z-index: 0; }
    .tab .shape { position: absolute; left: 0; top: 0; z-index: -1; }
    .tab.on { z-index: 1; height: 23px; margin-bottom: -1px; }
    .gear { margin-left: auto; width: 20px; height: 20px; }
    .box { flex: 1; min-height: 0; background: #fff; border: 1px solid #9aa3bb; border-top: 0; box-sizing: border-box; }
    .strip { display: flex; height: 24px; align-items: center; background: #f6f7f9; border-bottom: 1px solid #a0a7b8; }
    .strip button { width: 28px; height: 24px; display: flex; align-items: center; justify-content: center; }
    table { border-collapse: collapse; table-layout: fixed; width: 100%; }
    th { height: 23px; font-weight: 400; text-align: left; padding: 0 0 0 6px; border-right: 1px solid #e3e5ea; border-bottom: 1px solid #d5d5d5; background: linear-gradient(#fff 45%, #f3f4f6 50%, #fdfdfd); box-sizing: border-box; white-space: nowrap; }
    td { height: 20px; padding: 0 0 0 8px; box-sizing: border-box; border-bottom: 1px dotted #e4e4e4; white-space: nowrap; line-height: 19px; }
    .c { text-align: center; padding: 0; }
    td.lt, td.pw { padding-left: 3px; }
    th:nth-child(n + 8):last-child { border-right: 0; }
    .c svg { margin: 0 auto; }
    .sel td:not(:last-child) { background: #3399ff; color: #fff; }
    .cur td { font-weight: 700; }
    .sw { width: 14px; height: 14px; border: 1px solid #000; margin: 0 auto; display: block; }
    .sel .sw { border-color: #fff; }
  `;
  render() {
    return html`
      <div class="grip"></div>
      <div class="tabs">
        ${panelTabs.map(([ic, t], i) => html`<button class=${classMap({ tab: true, on: i === 2 })}>
          <svg class="shape" width="72" height="23" viewBox="0 0 72 23"><path d="M.500 23V3Q.500 .500 3 .500H54Q57 .500 59 3L71 17V23Z" fill=${i === 2 ? "#f6f7f9" : "#d5d9e8"}/><path d=${i === 2 ? "M.500 23V3Q.500 .500 3 .500H54Q57 .500 59 3L71 22" : "M.500 21V3Q.500 .500 3 .500H54Q57 .500 59 3L68 13V21"} fill="none" stroke="#9aa3bb"/></svg>
          ${smallIcon(ic)}<span>${t}</span></button>`)}
        <button class="gear" aria-label="Panel options">${smallIcon("gear")}</button>
      </div>
      <div class="box">
        <div class="strip">${panelTools.map((n) => html`<button aria-label=${n.slice(1)}>${icon(n)}</button>`)}</div>
        <table>
          <colgroup>${[86, 48, 17, 77, 67, 81, 17, 80, 0].map((w) => html`<col style=${w ? `width:${w}px` : ""} />`)}</colgroup>
          <thead><tr><th>Name</th><th class="c">Curr...</th><th></th><th class="c">Lock</th><th class="c">Color</th><th>Linetype</th><th></th><th>Print Width</th><th></th></tr></thead>
          <tbody>
            ${layers.map((l) => html`<tr class=${classMap({ sel: !!l.sel, cur: !!l.cur })}>
              <td>${l.name}</td>
              <td class="c">${l.cur ? html`<svg width="12" height="12" viewBox="0 0 12 12"><path d="M1 6.500L3 5.500L4.500 8L10 1.500L11 2.500L4.500 11Z"/></svg>` : ""}</td>
              <td class="c">${l.cur ? "" : html`<svg width="12" height="16" viewBox="0 0 12 16"><path d="M6 1.500C3 1.500 2 3.500 2 5.500C2 7.500 4 8.500 4 10.500H8C8 8.500 10 7.500 10 5.500C10 3.500 9 1.500 6 1.500Z" fill="#ffff9c" stroke="#8a8a00"/><path d="M4.500 12.500H7.500M5 14.500H7" stroke="#222" stroke-width="1.500"/></svg>`}</td>
              <td class="c">${l.cur ? "" : html`<svg width="14" height="16" viewBox="0 0 14 16"><rect x="2.500" y="7.500" width="7" height="6" fill="#fff" stroke="#000" stroke-width="1.200"/><path d="M7.500 7V5Q7.500 2.500 9.500 2.500Q12 2.500 12 5V6" fill="none" stroke=${l.sel ? "#fff" : "#000"} stroke-width="1.200"/></svg>`}</td>
              <td class="c"><span class="sw" style=${`background:${l.color}`}></span></td>
              <td class="lt">${l.lt}</td>
              <td class="c"><svg width="14" height="14" viewBox="0 0 14 14"><path d="M7 1L13 7L7 13L1 7Z" fill=${l.color} stroke=${l.sel ? "#fff" : "#222"}/></svg></td>
              <td class="pw">${l.pw}</td><td></td>
            </tr>`)}
          </tbody>
        </table>
      </div>`;
  }
}

@customElement("app-root")
class AppRoot extends LitElement {
  static styles = css`
    :host { display: block; position: relative; height: 100vh; box-sizing: border-box; overflow: hidden; font: 14px "Liberation Sans", Arial, sans-serif; color: #000; }
    button { font: inherit; color: inherit; background: none; border: 0; padding: 0; margin: 0; }
    svg { display: block; flex: none; }
    .frame { height: 100%; box-sizing: border-box; display: flex; flex-direction: column; border: 1px solid #20252f; border-radius: 7px; padding: 0 7px 7px; background: linear-gradient(180deg, transparent 225px, #aed2f5 226px, #b9d8f6 100%), linear-gradient(90deg, #dfecfa 0, #cfe3f8 180px, #bcd8f5 500px, #b2d1f2 800px, #c2dcf6 1040px, #cfe1f4 100%); box-shadow: inset 0 0 0 1px #eef6ff; }
    .title { height: 34px; flex: none; display: flex; align-items: center; font: 14px "Open Sans", "Noto Sans", sans-serif; }
    .title .logo { margin: 0 6px 0 1px; }
    .title .gap { width: 148px; }
    .wb { margin-left: auto; align-self: flex-start; display: flex; border: 1px solid #4d5d70; border-top: 0; border-radius: 0 0 5px 5px; overflow: hidden; }
    .wb button { height: 23px; width: 33px; display: grid; place-items: center; background: linear-gradient(#e2e9f2 45%, #b5c3d5 50%, #c9d8e8); border-right: 1px solid #4d5d70; }
    .wb button:last-child { width: 60px; border: 0; background: linear-gradient(#e0a49a 40%, #c03a22 50%, #d3563c); }
    .client { flex: 1; min-height: 0; display: flex; flex-direction: column; border: 1px solid #5d6b80; background: #dfe2ea; }
    .menu { flex: none; height: 23px; padding-left: 7px; font: 14px "Open Sans", "Noto Sans", sans-serif; background: linear-gradient(#fafbfe 0, #eef0f8 40%, #d9dff0 45%, #dee4f4 100%); border-bottom: 1px solid #b4bace; }
    .menu div { height: 100%; max-width: 848px; display: flex; align-items: center; justify-content: space-between; }
    .grip { width: 3px; box-sizing: border-box; border-left: 1px solid #b4b8c6; border-right: 1px solid #b4b8c6; }
    .cmd { flex: none; display: grid; grid-template-columns: 3px 1fr; gap: 1px; padding: 3px 0 2px 3px; border-bottom: 1px solid #c0c4d2; }
    .cmd .in { background: #fff; }
    .hist { display: flex; justify-content: space-between; height: 31px; border-bottom: 1px solid #9aa3bb; }
    .hist p { margin: 0; padding: 2px 1px; line-height: 16px; }
    .sb { width: 20px; background: #f0f0f2; display: flex; flex-direction: column; justify-content: space-between; align-items: center; padding: 5px 0; box-sizing: border-box; }
    .prompt { display: flex; height: 21px; align-items: center; padding: 0 2px 4px 1px; box-sizing: border-box; gap: 4px; }
    .prompt label { font-weight: 700; }
    .prompt input { flex: 1; border: 0; outline: 0; padding: 0; font: inherit; background: transparent; }
    .spin { display: grid; gap: 1px; align-self: start; padding-top: 1px; }
    .spin button { width: 18px; height: 9px; border: 1px solid #aab2c6; box-sizing: border-box; background: #eef0f6; display: grid; place-items: center; }
    .bars { flex: none; display: grid; grid-template-columns: 3px minmax(0, 1fr); gap: 4px; padding: 5px 0 5px 3px; height: 62px; box-sizing: border-box; }
    .bars .col { min-width: 0; overflow: hidden; }
    .tabs { display: flex; height: 18px; font-size: 13px; position: relative; border-bottom: 1px solid #9aa3bb; margin-left: -3px; }
    .tab { display: flex; flex: none; margin-right: -8px; position: relative; height: 18px; }
    .tab span { display: flex; align-items: center; border-top: 1px solid #9aa3bb; border-right: 1px solid #9aa3bb; border-radius: 0 4px 0 0; background: #d5d9e8; padding: 0 13px 0 7px; height: 17px; }
    .tab.on { z-index: 1; height: 19px; margin-right: -6px; }
    .tab.on span { background: #f8f9fb; height: 18px; padding-left: 1px; padding-right: 12px; box-sizing: border-box; }
    .tab.wide span { padding-right: 17px; }
    .tab.blank span { width: 201px; box-sizing: border-box; height: 18px; }
    .more { position: absolute; right: 0; top: 1px; width: 32px; height: 17px; background: #d5d9e8; border-left: 1px solid #9aa3bb; display: flex; align-items: center; justify-content: space-between; box-sizing: border-box; padding-left: 3px; z-index: 2; }
    .tools { display: flex; padding-top: 1px; margin-left: -3px; background: linear-gradient(#f8f9fb 0, #e2e5ec 90%); }
    .tools button { width: 28px; height: 28px; flex: none; }
    .main { flex: 1; min-height: 0; display: grid; grid-template-columns: 64px minmax(0, 1fr) 500px; }
    .side { padding: 3px 6px 0 1px; min-height: 0; }
    .side .hg { height: 3px; margin: 0 0 0 3px; border-top: 1px solid #b4b8c6; border-bottom: 1px solid #b4b8c6; box-sizing: border-box; }
    .side .g { display: grid; grid-template-columns: 28px 28px; padding-top: 2px; }
    .side button { height: 28px; }
    .view { display: flex; flex-direction: column; min-width: 0; min-height: 0; margin-right: 7px; }
    .canvas { flex: 1; min-height: 0; position: relative; border: 1px solid #9aa3bb; }
    .canvas rhino-plan { width: 100%; height: 100%; }
    .vl { position: absolute; left: 0; top: 0; width: 51px; height: 23px; background: #8fa9c6; display: flex; align-items: center; }
    .vl span { flex: 1; text-align: center; }
    .vl i { width: 10px; height: 20px; border-left: 1px solid #000; display: grid; place-items: center; }
    .vt { flex: none; height: 29px; display: flex; }
    .vt button { height: 25px; flex: none; position: relative; display: flex; }
    .vt span { display: flex; align-items: center; background: #d5d9e8; border-right: 1px solid #9aa3bb; border-bottom: 1px solid #9aa3bb; border-radius: 0 0 4px 0; padding: 0 10px 0 4px; height: 24px; }
    .vt .on span { background: #fff; padding-left: 3px; }
    .vt .plus span { background: #dfe2ea; padding: 0 11px 0 7px; }
    layer-panel { margin-bottom: 6px; }
    .snap { flex: none; height: 29px; display: flex; align-items: center; padding-left: 3px; }
    .snap .grip { height: 24px; margin-right: 3px; }
    .snap label { display: flex; align-items: center; gap: 3px; margin-right: 4px; }
    .snap input { appearance: none; margin: 0; width: 21px; height: 20px; border: 1px solid #8e8f92; background: linear-gradient(135deg, #c4c8cf, #f8f8f8) content-box, #f4f4f4; padding: 3px; box-sizing: border-box; display: grid; }
    .snap input:checked::before { content: ""; background: #3b5aa0; clip-path: polygon(5% 52%, 24% 42%, 42% 66%, 78% 0, 100% 4%, 46% 100%, 34% 100%); }
    .snap .r input { width: 19px; margin-right: 1px; border-radius: 3px; background: linear-gradient(#f4f4f4 50%, #d8d8d8 52%); }
    .snap .r input:checked { background: #8d8f92; border: 2px solid #3c6d9e; }
    .snap .r input:checked::before { display: none; }
    .status { flex: none; height: 22px; box-sizing: border-box; border-top: 1px solid #9aa3bb; display: flex; }
    .status > * { box-sizing: border-box; border-right: 1px solid #9aa3bb; display: flex; align-items: center; justify-content: center; white-space: nowrap; flex: none; overflow: hidden; }
    .status .on { background: #e4f4fd; font-weight: 700; }
    .status .lay { flex: 1 1 157px; justify-content: flex-start; padding-left: 3px; gap: 2px; }
    .status .lay i { width: 14px; height: 14px; border: 1px solid #000; background: #bf3f3f; }
    .status .end { width: 22px; border: 0; }
    .notes { position: absolute; left: 0; top: 0; pointer-events: none; font-family: "Liberation Sans", Arial, sans-serif; }
  `;

  private tri(up: boolean, c: string, s = 6) {
    return html`<svg width=${s} height="4" viewBox="0 0 6 4"><path d=${up ? "M0 4L3 0L6 4Z" : "M0 0L3 4L6 0Z"} fill=${c} /></svg>`;
  }
  private tool(n: string) {
    const t = n.endsWith("*");
    const k = t ? n.slice(0, -1) : n;
    return html`<button aria-label=${k}>${icon(k, t)}</button>`;
  }
  private cell(t: string, w: number, on = false) {
    return html`<button class=${classMap({ on })} style=${`width:${w}px`}>${t}</button>`;
  }

  render() {
    return html`
      <div class="frame">
        <div class="title">
          <svg class="logo" width="20" height="20" viewBox="0 0 20 20"><rect width="20" height="20" fill="#222"/><path d="M1 8L4 5L7 8L12 9L17 6L16 12L11 19L8 15L3 13Z" fill="#ddd"/><path d="M6 2L14 2L18 4L16 8L10 8Z" fill="#555"/><path d="M3 10L5 9" stroke="#a33" stroke-width="1.500"/></svg>
          <span>A323_</span><span class="gap"></span><span>- Rhinoceros 5.0 Not For Resale Lab - [Top]</span>
          <div class="wb">
            <button aria-label="Minimize"><svg width="18" height="6"><rect x=".500" y=".500" width="17" height="4" fill="#fff" stroke="#444"/></svg></button>
            <button aria-label="Maximize"><svg width="18" height="14"><rect x="1" y="1" width="16" height="12" fill="#fff" stroke="#444"/><rect x="5" y="5" width="8" height="4" fill="#c3d0e0" stroke="#444"/></svg></button>
            <button aria-label="Close"><svg width="16" height="14"><path d="M1 1H5L8 4.500L11 1H15L10.500 7L15 13H11L8 9.500L5 13H1L5.500 7Z" fill="#fff" stroke="#444"/></svg></button>
          </div>
        </div>
        <div class="client">
          <nav class="menu"><div>${menus.map((m) => html`<button>${m}</button>`)}</div></nav>
          <div class="cmd">
            <div class="grip"></div>
            <div class="in">
              <div class="hist"><p>1 text added to selection.</p><div class="sb">${this.tri(true, "#333")}${this.tri(false, "#333")}</div></div>
              <div class="prompt"><label for="c">Command:</label><input id="c" type="text" /><div class="spin"><button aria-label="Previous">${this.tri(true, "#3b5aa0", 8)}</button><button aria-label="Next">${this.tri(false, "#3b5aa0", 8)}</button></div></div>
            </div>
          </div>
          <div class="bars">
            <div class="grip"></div>
            <div class="col">
              <div class="tabs">
                ${toolTabs.map((t, i) => html`<button class=${classMap({ tab: true, on: i === 0, blank: !t, wide: i > 8 })}><svg width="12" height="19" viewBox="0 0 12 19"><path d="M0 19L9 2Q10 .500 12 .500V19Z" fill=${i ? "#d5d9e8" : "#f8f9fb"}/><path d="M0 18L9 2Q10 .500 12 .500" fill="none" stroke="#9aa3bb"/></svg><span>${t}</span></button>`)}
                <div class="more"><span>»</span>${smallIcon("gear")}</div>
              </div>
              <div class="tools">${mainTools.map((n) => this.tool(n))}</div>
            </div>
          </div>
          <div class="main">
            <div class="side"><div class="hg"></div><div class="g">${sideTools.map((n) => this.tool(n))}</div></div>
            <div class="view">
              <div class="canvas"><rhino-plan></rhino-plan><button class="vl"><span>Top</span><i>${this.tri(false, "#000")}</i></button></div>
              <div class="vt">
                ${["Top", "Perspective", "Front", "Right", "+"].map((t, i) => html`<button class=${classMap({ on: i === 0, plus: i === 4 })}><svg width="10" height="25" viewBox="0 0 10 25"><path d="M.500 0V13L9 23.500Q9.500 24.500 10 24.500V0Z" fill=${i === 0 ? "#fff" : i === 4 ? "#dfe2ea" : "#d5d9e8"}/><path d=${i === 0 || i === 4 ? "M.500 0V13L9 23.500Q9.500 24.500 10 24.500" : "M.500 13L9 23.500Q9.500 24.500 10 24.500"} fill="none" stroke="#9aa3bb"/></svg><span>${i === 4 ? html`<svg width="11" height="11"><path d="M4 1H7V4H10V7H7V10H4V7H1V4H4Z" fill="#fff" stroke="#666"/></svg>` : t}</span></button>`)}
              </div>
            </div>
            <layer-panel></layer-panel>
          </div>
          <div class="snap">
            <div class="grip"></div>
            ${snaps.map(([t, c]) => html`<label><input type="checkbox" .checked=${c} />${t}</label>`)}
            <label class="r"><input type="checkbox" .checked=${true} />Project</label>
            <label class="r"><input type="checkbox" />Disable</label>
          </div>
          <div class="status">
            ${this.cell("World", 62, true)}${this.cell("x 264.263", 80)}${this.cell("y 334.845", 80)}${this.cell("z 0.000", 80)}${this.cell("Inches", 80)}
            <button class="lay"><i></i>Text</button>
            ${this.cell("Grid Snap", 83)}${this.cell("Ortho", 53, true)}${this.cell("Planar", 58, true)}${this.cell("Osnap", 58, true)}${this.cell("SmartTrack", 95)}${this.cell("Gumball", 70, true)}${this.cell("Record History", 119)}${this.cell("Filter", 48)}
            <div style="width:7px">(</div><div class="end"></div>
          </div>
        </div>
      </div>
      <svg class="notes" width="1169" height="460" viewBox="0 0 1169 460">
        <defs><filter id="sh" x="-10%" y="-10%" width="120%" height="140%"><feDropShadow dx="4" dy="4" stdDeviation="2.500" flood-color="#000" flood-opacity=".5"/></filter></defs>
        <g filter="url(#sh)"><path d="M487 98L295 423M487 98L674 296" fill="none" stroke="#c00000" stroke-width="3" stroke-linejoin="round"/>
          <path d="M289 434L289 419L303 427ZM683 304L667 298L677 288Z" fill="#c00000"/></g>
        <rect x="662" y="300.500" width="429" height="20.500" fill="none" stroke="#c00000" stroke-width="2" filter="url(#sh)"/>
        <path d="M668 111.500H808Q834 111.500 834 132V152Q834 172.500 808 172.500H794L815 203L780 172.500H668Q642 172.500 642 152V132Q642 111.500 668 111.500Z" fill="#fff" stroke="#c00000" stroke-width="2" filter="url(#sh)"/>
        <text x="735.500" y="136" font-size="20" fill="#cc0000" text-anchor="middle">Print Width set to</text>
        <text x="735.500" y="159" font-size="20" fill="#cc0000" text-anchor="middle">Layer</text>
      </svg>`;
  }
}
